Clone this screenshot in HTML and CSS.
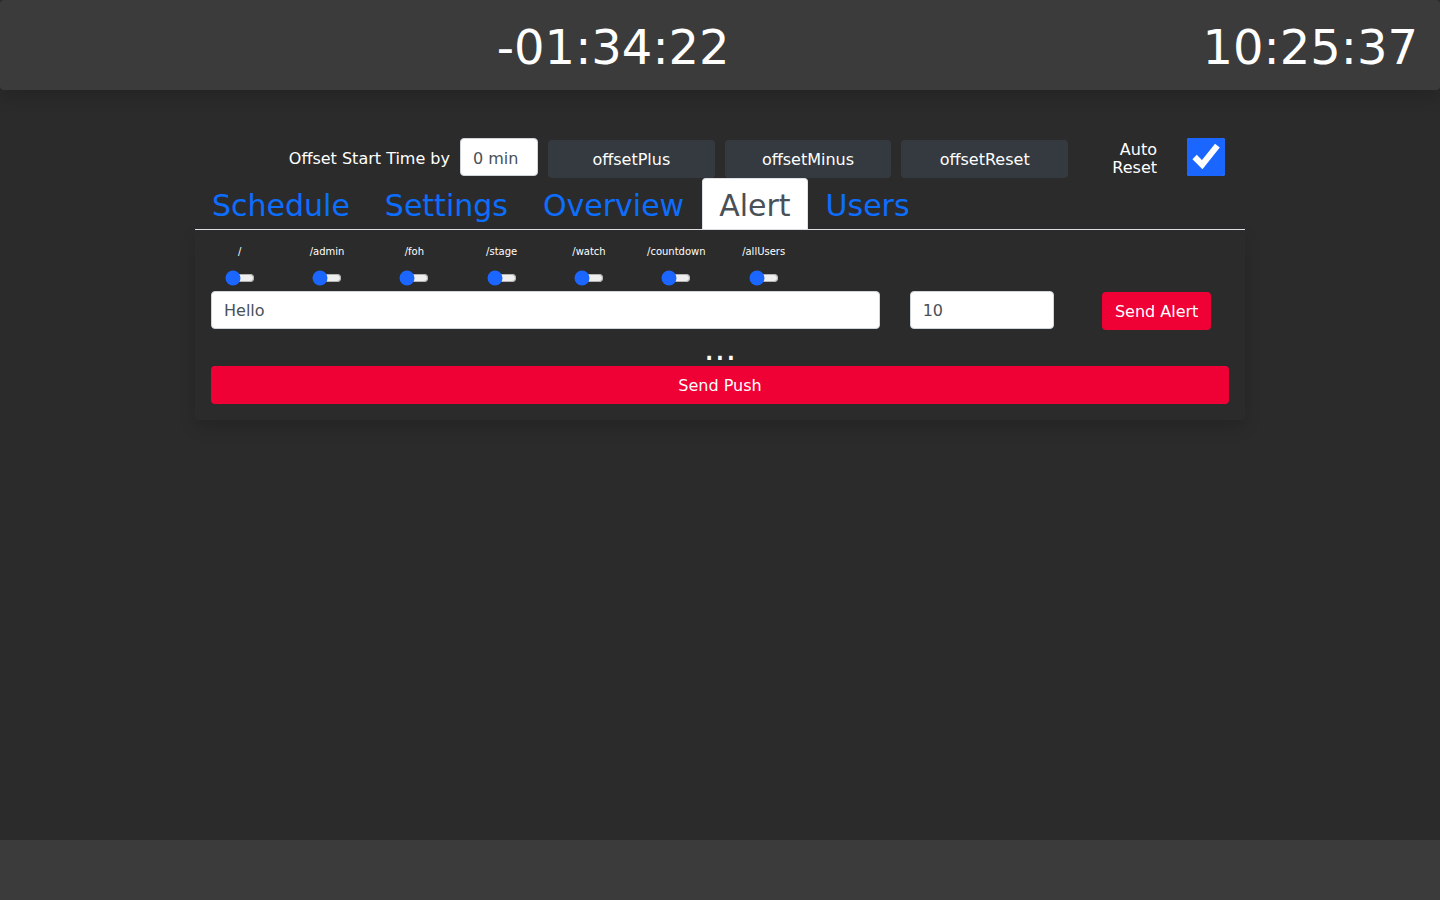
FILE: index.html
```html
<!DOCTYPE html>
<html lang="en">
<head>
<meta charset="utf-8">
<meta name="viewport" content="width=device-width, initial-scale=1">
<title>Admin</title>
<link rel="stylesheet" href="styles.css">
</head>
<body>
<header class="topbar">
  <span></span>
  <time class="clock">-01:34:22</time>
  <time class="clock">10:25:37</time>
</header>
<main class="container">
  <form class="offset-row">
    <label class="offset-label" for="offset">Offset Start Time by</label>
    <input class="control offset-input" id="offset" type="text" value="0 min">
    <button class="btn btn-dark" type="button">offsetPlus</button>
    <button class="btn btn-dark" type="button">offsetMinus</button>
    <button class="btn btn-dark" type="button">offsetReset</button>
    <label class="auto-label" for="auto">Auto Reset</label>
    <input class="auto-check" id="auto" type="checkbox" checked>
  </form>
  <nav class="tabs">
    <a class="tab" href="#schedule">Schedule</a>
    <a class="tab" href="#settings">Settings</a>
    <a class="tab" href="#overview">Overview</a>
    <a class="tab tab-active" href="#alert">Alert</a>
    <a class="tab" href="#users">Users</a>
  </nav>
  <section class="panel" id="alert">
    <div class="grid targets">
      <div class="target"><label for="t1">/</label><input id="t1" type="range" min="0" max="1" value="0"></div>
      <div class="target"><label for="t2">/admin</label><input id="t2" type="range" min="0" max="1" value="0"></div>
      <div class="target"><label for="t3">/foh</label><input id="t3" type="range" min="0" max="1" value="0"></div>
      <div class="target"><label for="t4">/stage</label><input id="t4" type="range" min="0" max="1" value="0"></div>
      <div class="target"><label for="t5">/watch</label><input id="t5" type="range" min="0" max="1" value="0"></div>
      <div class="target"><label for="t6">/countdown</label><input id="t6" type="range" min="0" max="1" value="0"></div>
      <div class="target"><label for="t7">/allUsers</label><input id="t7" type="range" min="0" max="1" value="0"></div>
    </div>
    <div class="grid">
      <div class="col col-8"><input class="control" type="text" value="Hello" aria-label="Alert message"></div>
      <div class="col col-2"><input class="control" type="text" inputmode="numeric" value="10" aria-label="Alert duration"></div>
      <div class="col col-2 col-action"><button class="btn btn-red" type="button">Send Alert</button></div>
    </div>
    <div class="status">...</div>
    <button class="btn btn-red btn-block" type="button">Send Push</button>
  </section>
</main>
<footer class="bottombar"></footer>
</body>
</html>
```
FILE: styles.css
```css
*, *::before, *::after { box-sizing: border-box; }

body {
  margin: 0;
  min-height: 100vh;
  display: flex;
  flex-direction: column;
  background: #2b2b2b;
  color: #fff;
  font-family: "DejaVu Sans", Verdana, sans-serif;
  font-size: 16px;
  line-height: 18px;
}

.topbar {
  display: flex;
  justify-content: space-between;
  align-items: center;
  padding: 19px 22px 15px 24px;
  background: #3b3b3b;
  border-radius: 4px;
  box-shadow: 0 8px 16px rgba(0, 0, 0, .15);
}

.clock { font-size: 48px; line-height: 56px; }

.container {
  flex: 1;
  width: 100%;
  max-width: 1050px;
  margin: 0 auto;
  padding-top: 48px;
}

.offset-row {
  display: flex;
  gap: 10px;
  height: 40px;
  padding-right: 20px;
}

.offset-label {
  flex: 0 0 255px;
  padding-top: 12px;
  text-align: right;
}

.control {
  display: block;
  width: 100%;
  height: 38px;
  padding: 0 12px;
  border: 1px solid #ced4da;
  border-radius: 4px;
  background: #fff;
  color: #495057;
  font: inherit;
}

.offset-input {
  flex: 0 0 78px;
  padding-top: 2px;
}

.btn {
  height: 38px;
  padding: 2px 13px 0;
  border: 0;
  border-radius: 4px;
  color: #fff;
  font: inherit;
}

.btn-dark {
  flex: 1;
  align-self: flex-end;
  background: #343a40;
}

.btn-red { background: #ef0035; }
.btn-block { display: block; width: 100%; }

.auto-label {
  flex: 0 0 79px;
  padding: 3px 0 0 24px;
  text-align: right;
}

.auto-check {
  flex: none;
  width: 38px;
  height: 38px;
  margin: 0 0 0 20px;
  accent-color: #1a66ff;
}

.tabs {
  display: flex;
  gap: 1px;
  border-bottom: 1px solid #dee2e6;
}

.tab {
  padding: 10px 16px 6px;
  border: 1px solid transparent;
  border-bottom: 0;
  border-radius: 4px 4px 0 0;
  color: #0d6efd;
  font-size: 30px;
  line-height: 34px;
  text-decoration: none;
}

.tab-active {
  border-color: #dee2e6;
  background: #fff;
  color: #495057;
}

.panel {
  padding: 16px;
  border-radius: 4px;
  box-shadow: 0 8px 16px rgba(0, 0, 0, .15);
}

.grid {
  display: grid;
  grid-template-columns: repeat(12, 1fr);
  margin: 0 -15px;
}

.targets { margin-bottom: 5px; }

.target {
  display: flex;
  flex-direction: column;
  align-items: center;
  gap: 12px;
  min-width: 0;
  font-size: 10px;
  line-height: 12px;
}

.target input {
  width: 30px;
  height: 16px;
  margin: 0;
  accent-color: #1a66ff;
}

.col { padding: 0 15px; }
.col-8 { grid-column: span 8; }
.col-2 { grid-column: span 2; }
.col-action { padding-top: 1px; text-align: center; }

.status {
  font-size: 34px;
  line-height: 36px;
  text-align: center;
}

.bottombar {
  height: 60px;
  background: #3b3b3b;
}
```
